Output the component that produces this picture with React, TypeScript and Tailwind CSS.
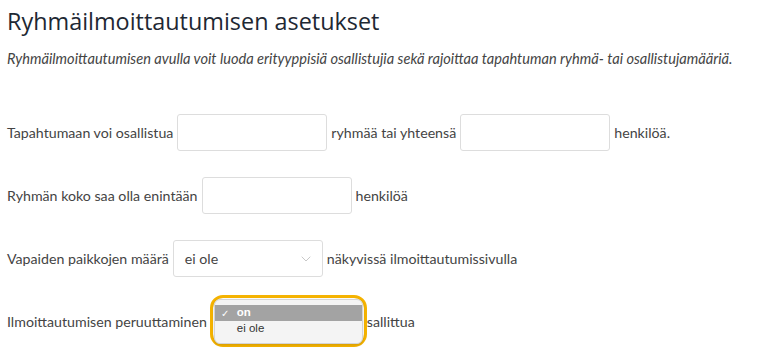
import { ChevronDown } from "lucide-react";

const TextBox = () => (
  <input
    type="text"
    className="h-[37px] w-[150px] rounded-[3px] border border-[#dddddd] bg-white px-2 text-[14px] outline-none"
  />
);

const OpenMenu = () => (
  <div className="relative h-[37px] w-[152px]">
    {/* focus ring around the open native menu */}
    <div className="absolute -left-[1px] -top-[8px] h-[52px] w-[157px] rounded-[13px] border-[3px] border-[#f5b301]">
      <div className="mx-px mt-px overflow-hidden rounded-[6px] border border-[#d4d4d4] bg-[#f4f4f4] pb-[6px] pt-[5px] font-['Liberation_Sans',sans-serif] text-[11.5px] shadow-[0_1px_3px_rgba(0,0,0,0.15)]">
        <div className="flex h-[16px] items-center bg-[#a3a3a3] text-white">
          <span className="w-[22px] pl-[6px] text-[10px]">✓</span>
          <span className="font-semibold">on</span>
        </div>
        <div className="flex h-[16px] items-center text-[#333]">
          <span className="w-[22px]" />
          <span>ei ole</span>
        </div>
      </div>
    </div>
  </div>
);

export default function App() {
  return (
    <div className="min-h-[359px] bg-white pl-[7px] font-['Lato',sans-serif] text-[14.2px] text-[#444]">
      <h1 className="pt-[6px] font-['Open_Sans',sans-serif] text-[23.4px] leading-[30px] text-[#1e2833]">
        Ryhmäilmoittautumisen asetukset
      </h1>
      <p className="mt-[14px] text-[14.6px] italic leading-[18px] text-[#444]">
        Ryhmäilmoittautumisen avulla voit luoda erityyppisiä osallistujia sekä rajoittaa tapahtuman ryhmä- tai osallistujamääriä.
      </p>

      <div className="mt-[46px] flex flex-col gap-[26px]">
        <div className="flex items-center gap-[4px]">
          <span>Tapahtumaan voi osallistua</span>
          <TextBox />
          <span>ryhmää tai yhteensä</span>
          <TextBox />
          <span>henkilöä.</span>
        </div>

        <div className="flex items-center gap-[4px]">
          <span>Ryhmän koko saa olla enintään</span>
          <TextBox />
          <span>henkilöä</span>
        </div>

        <div className="flex items-center gap-[4px]">
          <span>Vapaiden paikkojen määrä</span>
          <div className="flex h-[37px] w-[150px] items-center justify-between rounded-[3px] border border-[#dddddd] bg-white pl-[11px] pr-[8px]">
            <span className="text-[#444]">ei ole</span>
            <ChevronDown className="h-[16px] w-[16px] text-[#c8c8c8]" strokeWidth={1.5} />
          </div>
          <span>näkyvissä ilmoittautumissivulla</span>
        </div>

        <div className="flex items-center gap-[4px]">
          <span>Ilmoittautumisen peruuttaminen</span>
          <OpenMenu />
          <span>sallittua</span>
        </div>
      </div>
    </div>
  );
}
